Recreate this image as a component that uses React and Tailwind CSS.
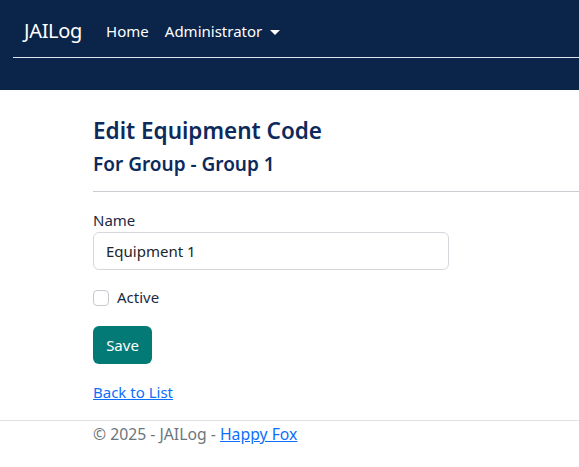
import React from "react";

export default function App() {
  return (
    <div className="min-h-[467px] w-[579px] overflow-hidden bg-white font-['Noto_Sans',sans-serif]">
      <nav className="h-[90px] bg-[#0b2449] pl-[13px]">
        <div className="flex h-[58px] items-center border-b border-[#dfe3ea] pl-[11px] pt-[5px]">
          <span className="text-[20px] leading-none text-white tracking-[-0.3px]">JAILog</span>
          <div className="ml-[24px] flex items-center gap-[16px] text-[15px] text-white">
            <span>Home</span>
            <span className="flex items-center">
              Administrator
              <span className="ml-[8px] mt-[2px] h-0 w-0 border-x-[5px] border-t-[5px] border-x-transparent border-t-white"></span>
            </span>
          </div>
        </div>
      </nav>

      <main className="pl-[93px] pt-[27px]">
        <h3 className="text-[22.5px] font-semibold leading-[1.2] text-[#0c2a5b]">Edit Equipment Code</h3>
        <h5 className="mt-[9px] text-[19px] font-semibold leading-[1.2] text-[#0c2a5b]">For Group - Group 1</h5>
        <div className="mt-[15px] w-[600px] border-t border-[#c9ccd1]"></div>

        <div className="mt-[17px] text-[15px] text-[#1b2a45]">
          <label className="block leading-[1.5]">Name</label>
          <div className="mt-[1px] flex h-[38px] w-[356px] items-center rounded-[6px] border border-[#d4d7dc] px-[12px] text-[15px] text-[#212529]">
            Equipment 1
          </div>
          <div className="mt-[16px] flex items-center">
            <span className="h-[16px] w-[16px] rounded-[4px] border border-[#c6c9ce] bg-white"></span>
            <span className="ml-[8px]">Active</span>
          </div>
          <button className="mt-[17px] flex h-[38px] w-[59px] items-center justify-center rounded-[6px] bg-[#047a76] text-[15px] text-white">
            Save
          </button>
          <div className="mt-[17px]">
            <a href="#" className="text-[#0d6efd] underline">Back to List</a>
          </div>
        </div>
      </main>

      <footer className="mt-[17px] border-t border-[#dee2e6] pl-[93px] pt-[2px] text-[15.75px] text-[#6c757d]">
        © 2025 - JAILog - <a href="#" className="text-[#0d6efd] underline">Happy Fox</a>
      </footer>
    </div>
  );
}
